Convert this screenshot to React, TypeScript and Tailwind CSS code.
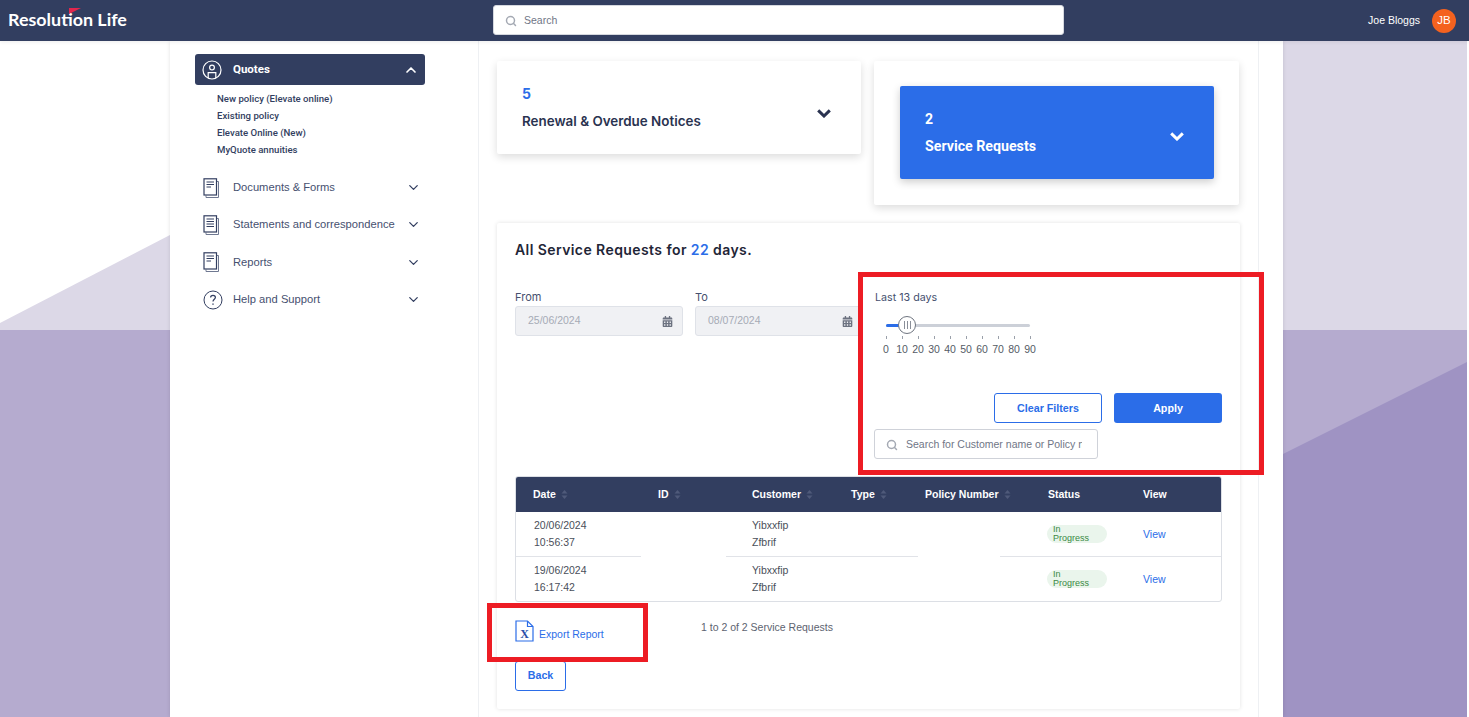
import { ChevronDown, ChevronUp, Search } from "lucide-react";
import { FaCalendarAlt } from "react-icons/fa";

const NAVY = "bg-[#323e60]";
const ARIAL = "font-['Liberation_Sans',Arial,sans-serif]";

const DocIcon = ({ dense }: { dense?: boolean }) => (
  <svg width="16" height="20" viewBox="0 0 16 20" fill="none" stroke="#323e60">
    <path d="M3 17.5V19.5H15.5V3.5H13.5" strokeWidth="1" stroke="#6f7891" />
    <rect x="1" y="0.8" width="12.5" height="16.2" strokeWidth="1.2" fill="#fff" />
    <path d="M3.5 4H11M3.5 6.5H11" strokeWidth="1" />
    {dense ? <path d="M3.5 9H11M3.5 11.5H11" strokeWidth="1" /> : <path d="M3.5 9H8" strokeWidth="1" />}
  </svg>
);

const HelpIcon = () => (
  <svg width="20" height="20" viewBox="0 0 20 20" fill="none" stroke="#323e60" strokeWidth="1">
    <circle cx="10" cy="10" r="9" />
    <path d="M7.6 7.6C7.6 6.2 8.7 5.4 10 5.4C11.4 5.4 12.4 6.3 12.4 7.5C12.4 9.3 10 9.3 10 11.6" strokeWidth="1.2" />
    <path d="M10 13.4V14.8" strokeWidth="1.4" />
  </svg>
);

const UserIcon = () => (
  <svg width="20" height="20" viewBox="0 0 20 20" fill="none" stroke="#fff" strokeWidth="1.2">
    <circle cx="10" cy="10" r="9" />
    <circle cx="10" cy="7.6" r="2.4" />
    <path d="M6.2 18V12.6H13.8V18" />
  </svg>
);

const SortIcon = () => (
  <svg width="7" height="11" viewBox="0 0 7 11" fill="#4f5a7a">
    <path d="M3.5 1L6.5 4.5H0.5Z" />
    <path d="M3.5 10L0.5 6.5H6.5Z" />
  </svg>
);

const BoldChevron = () => (
  <svg width="14" height="9" viewBox="0 0 14 9" fill="none" stroke="currentColor" strokeWidth="3">
    <path d="M1.2 1.4L7 7L12.8 1.4" />
  </svg>
);

const ExcelIcon = () => (
  <svg width="19" height="22" viewBox="0 0 19 22" fill="none" stroke="#2b6de8" strokeWidth="1.2">
    <path d="M1 1H12.5L18 6.5V21H1Z" />
    <path d="M12.5 1V6.5H18" />
    <text x="9.5" y="18" textAnchor="middle" fontFamily="'Liberation Serif', serif" fontSize="12" fontWeight="700" fill="#2b4fa8" stroke="none">
      X
    </text>
  </svg>
);

const navItems = [
  { label: "Documents & Forms", icon: <DocIcon />, h: "h-[37px]" },
  { label: "Statements and correspondence", icon: <DocIcon dense />, h: "h-[37px]" },
  { label: "Reports", icon: <DocIcon />, h: "h-[38px]" },
  { label: "Help and Support", icon: <HelpIcon />, h: "h-[37px]" },
];

const quoteLinks = ["New policy (Elevate online)", "Existing policy", "Elevate Online (New)", "MyQuote annuities"];

const Sidebar = () => (
  <aside className="w-[309px] shrink-0 border-r border-[#eef0f3] pt-[13px] pl-[25px] pr-[53px] font-['Roboto',sans-serif]">
    <div className={`${NAVY} flex h-[31px] items-center rounded-[3px] pl-[7px] pr-[6px] text-white`}>
      <UserIcon />
      <span className="ml-[11px] flex-1 text-[11.5px] font-bold">Quotes</span>
      <ChevronUp size={16} strokeWidth={2.5} />
    </div>
    <ul className="mt-[5px] pl-[22px] text-[9.6px] leading-[17px] font-medium text-[#323e60]">
      {quoteLinks.map((l) => (
        <li key={l}>{l}</li>
      ))}
    </ul>
    <nav className="mt-[11px]">
      {navItems.map((n) => (
        <div key={n.label} className={`flex items-center text-[#46506f] ${n.h}`}>
          <span className="flex w-[38px] pl-[8px]">{n.icon}</span>
          <span className={`flex-1 text-[11.2px] whitespace-nowrap ${ARIAL}`}>{n.label}</span>
          <ChevronDown size={15} className="mr-[4px] text-[#323e60]" />
        </div>
      ))}
    </nav>
  </aside>
);

const DateField = ({ label, value }: { label: string; value: string }) => (
  <div>
    <div className="mb-[1px] text-[11px] leading-[15px] text-[#46506f]">{label}</div>
    <div className={`flex h-[30px] items-center justify-between rounded-[3px] border border-[#dfe2e8] bg-[#f0f1f4] pr-[9px] pl-[12px] text-[10.5px] text-[#a6abb6] ${ARIAL}`}>
      {value}
      <FaCalendarAlt size={11} className="text-[#6c7280]" />
    </div>
  </div>
);

const RangeSlider = () => {
  const ticks = [0, 10, 20, 30, 40, 50, 60, 70, 80, 90];
  return (
    <div className={`mt-[19px] ml-[3px] w-[160px] ${ARIAL}`}>
      <div className="relative mx-[8px] h-[3px] w-[144px] rounded bg-[#ccd0d8]">
        <div className="h-[3px] w-[14px] rounded bg-[#2b6de8]" />
        <div className="absolute top-[-8px] left-[12px] flex h-[18px] w-[18px] items-center justify-center gap-[2px] rounded-full border border-[#6f7580] bg-white">
          <i className="h-[8px] w-px bg-[#8a8f99]" />
          <i className="h-[8px] w-px bg-[#8a8f99]" />
          <i className="h-[8px] w-px bg-[#8a8f99]" />
        </div>
      </div>
      <div className="mt-[9px] flex">
        {ticks.map((t) => (
          <div key={t} className="flex w-[16px] flex-col items-center">
            <i className="h-[3px] w-px bg-[#9aa0aa]" />
            <span className="mt-[4px] text-[10.5px] leading-[12px] text-[#555b66]">{t}</span>
          </div>
        ))}
      </div>
    </div>
  );
};

const headers = [
  { label: "Date", w: "w-[125px]", sort: true },
  { label: "ID", w: "w-[94px]", sort: true },
  { label: "Customer", w: "w-[99px]", sort: true },
  { label: "Type", w: "w-[74px]", sort: true },
  { label: "Policy Number", w: "w-[123px]", sort: true },
  { label: "Status", w: "w-[95px]", sort: false },
  { label: "View", w: "w-[50px]", sort: false },
];

const Row = ({ date, time, last }: { date: string; time: string; last?: boolean }) => {
  const line = last ? "" : "border-b border-[#e1e3e8]";
  return (
    <div className={`flex text-[10.5px] leading-[17px] text-[#4a4f5a] ${last ? "h-[44px]" : "h-[45px]"}`}>
      <div className={`flex w-[125px] flex-col justify-center pl-[18px] ${line}`}>
        <span>{date}</span>
        <span>{time}</span>
      </div>
      <div className="w-[85px]" />
      <div className={`flex w-[192px] flex-col justify-center pl-[26px] ${line}`}>
        <span>Yibxxfip</span>
        <span>Zfbrif</span>
      </div>
      <div className="w-[82px]" />
      <div className={`flex flex-1 items-center pl-[47px] ${line}`}>
        <span className="flex h-[18px] w-[60px] flex-col justify-center rounded-full bg-[#eaf5ec] pl-[6px] text-[9px] leading-[9px] text-[#3b8a45]">
          <span>In</span>
          <span>Progress</span>
        </span>
        <span className="ml-[36px] text-[10.5px] text-[#2b6de8]">View</span>
      </div>
    </div>
  );
};

const RequestsTable = () => (
  <div className={`mt-[17px] overflow-hidden rounded-[3px] border border-[#dcdfe5] ${ARIAL}`}>
    <div className={`${NAVY} flex h-[35px] items-center pl-[17px] text-[10.5px] font-bold text-white`}>
      {headers.map((h) => (
        <div key={h.label} className={`flex items-center gap-[5px] ${h.w}`}>
          {h.label}
          {h.sort && <SortIcon />}
        </div>
      ))}
    </div>
    <Row date="20/06/2024" time="10:56:37" />
    <Row date="19/06/2024" time="16:17:42" last />
  </div>
);

export default function App() {
  return (
    <div className={`relative h-[717px] overflow-hidden bg-white ${ARIAL}`}>
      {/* page backdrop */}
      <svg className="absolute inset-0" width="1469" height="717" viewBox="0 0 1469 717">
        <path d="M0 323L170 235V331H0Z" fill="#dcd8e7" />
        <rect x="0" y="330" width="170" height="387" fill="#b5abcf" />
        <rect x="1283" y="41" width="184" height="290" fill="#dcd8e7" />
        <rect x="1283" y="330" width="184" height="387" fill="#b5abcf" />
        <path d="M1283 454L1467 362V717H1283Z" fill="#9f93c3" />
      </svg>

      <header className={`${NAVY} relative z-10 flex h-[41px] items-center shadow-[0_1px_4px_rgba(0,0,0,0.08)]`}>
        <div className="relative mb-[3px] ml-[8px] w-[485px] font-['Lato',sans-serif] text-[17.9px] leading-[22px] font-bold text-white">
          Resolution Life
          <svg className="absolute top-[0px] left-[60px]" width="14" height="7" viewBox="0 0 14 7">
            <path d="M1 0H13L1 6Z" fill="#e2264d" />
          </svg>
        </div>
        <div className="mb-[1px] flex h-[30px] w-[571px] items-center rounded-[3px] border border-[#d5d8df] bg-white pt-[1px] pl-[11px] text-[10.5px] text-[#6f7686]">
          <Search size={12} strokeWidth={3} className="mr-[7px] text-[#a4a9b3]" />
          Search
        </div>
        <div className="ml-auto flex items-center gap-[12px] pr-[13px] text-[10.5px] font-bold text-white">
          <span className="font-normal">Joe Bloggs</span>
          <span className="flex h-[24px] w-[24px] items-center justify-center rounded-full bg-[#f4621f] text-[11.5px] font-normal">JB</span>
        </div>
      </header>

      <main className="relative ml-[170px] flex h-[676px] w-[1113px] bg-white shadow-[0_0_4px_rgba(0,0,0,0.12)]">
        <Sidebar />
        <section className="w-[780px] shrink-0 border-r border-[#eef0f3] pt-[20px] pl-[18px] font-['Inter',sans-serif]">
          <div className="flex items-start gap-[13px]">
            <div className="flex h-[93px] w-[364px] items-center justify-between rounded-[2px] bg-white pr-[30px] pl-[25px] shadow-[0_3px_8px_rgba(0,0,0,0.14)]">
              <div>
                <div className="text-[14px] leading-[18px] font-bold text-[#2b6de8]">5</div>
                <div className="mt-[9px] text-[13.4px] leading-[18px] font-semibold text-[#2a3350]">Renewal &amp; Overdue Notices</div>
              </div>
              <span className="mt-[12px] text-[#2a3350]">
                <BoldChevron />
              </span>
            </div>
            <div className="h-[144px] w-[365px] rounded-[2px] bg-white pt-[25px] pl-[26px] shadow-[0_3px_8px_rgba(0,0,0,0.14)]">
              <div className="flex h-[93px] w-[314px] items-center justify-between rounded-[2px] bg-[#2b6de8] pr-[30px] pl-[25px] text-white shadow-[0_3px_8px_rgba(0,0,0,0.2)]">
                <div className="font-['Roboto',sans-serif]">
                  <div className="text-[14px] leading-[18px] font-bold">2</div>
                  <div className="mt-[9px] text-[14.2px] leading-[18px] font-bold">Service Requests</div>
                </div>
                <span className="mt-[8px]">
                  <BoldChevron />
                </span>
              </div>
            </div>
          </div>

          <div className="mt-[18px] h-[486px] w-[743px] rounded-[2px] bg-white px-[18px] pt-[17px] shadow-[0_0_4px_rgba(0,0,0,0.12)]">
            <h2 className="text-[14px] leading-[20px] font-semibold tracking-[0.42px] text-[#1f2637]">
              All Service Requests for <span className="text-[#2b6de8]">22</span> days.
            </h2>

            <div className="mt-[30px] grid grid-cols-[168px_168px_1fr] gap-x-[12px]">
              <DateField label="From" value="25/06/2024" />
              <DateField label="To" value="08/07/2024" />
              <div>
                <div className="text-[10.7px] leading-[15px] text-[#46506f]">Last 13 days</div>
                <RangeSlider />
              </div>
            </div>

            <div className={`mt-[38px] flex justify-end gap-[12px] text-[10.7px] font-bold ${ARIAL}`}>
              <button className="h-[30px] w-[108px] rounded-[3px] border border-[#2b6de8] bg-white text-[#2b6de8]">Clear Filters</button>
              <button className="h-[30px] w-[108px] rounded-[3px] bg-[#2b6de8] text-white">Apply</button>
            </div>

            <div className="mt-[6px] ml-[359px] flex h-[30px] w-[224px] items-center rounded-[3px] border border-[#cfd2d9] pt-[1px] pr-[15px] pl-[11px]">
              <Search size={12} strokeWidth={3} className="mr-[8px] shrink-0 text-[#a4a9b3]" />
              <input
                readOnly
                placeholder="Search for Customer name or Policy number"
                className={`w-full min-w-0 bg-transparent text-[10.5px] outline-none placeholder:text-[#6f7686] ${ARIAL}`}
              />
            </div>

            <RequestsTable />

            <div className={`flex h-[59px] ${ARIAL}`}>
              <div className="flex w-[186px] items-start pt-[18px]">
                <ExcelIcon />
                <span className="mt-[7px] ml-[5px] text-[10.5px] text-[#2b6de8]">Export Report</span>
              </div>
              <div className="pt-[18px] text-[10.5px] text-[#5d6370]">1 to 2 of 2 Service Requests</div>
            </div>
            <button className={`h-[30px] w-[51px] rounded-[3px] border border-[#2b6de8] bg-white pb-[1px] text-[10.7px] font-bold text-[#2b6de8] ${ARIAL}`}>Back</button>
          </div>
        </section>
      </main>

      {/* review markers */}
      <div className="absolute top-[272px] left-[858px] h-[203px] w-[406px] border-[5px] border-[#ed1c24]" />
      <div className="absolute top-[603px] left-[487px] h-[59px] w-[161px] border-[5px] border-[#ed1c24]" />
      <div className="absolute top-[41px] right-0 bottom-0 w-[2px] bg-white" />
    </div>
  );
}
